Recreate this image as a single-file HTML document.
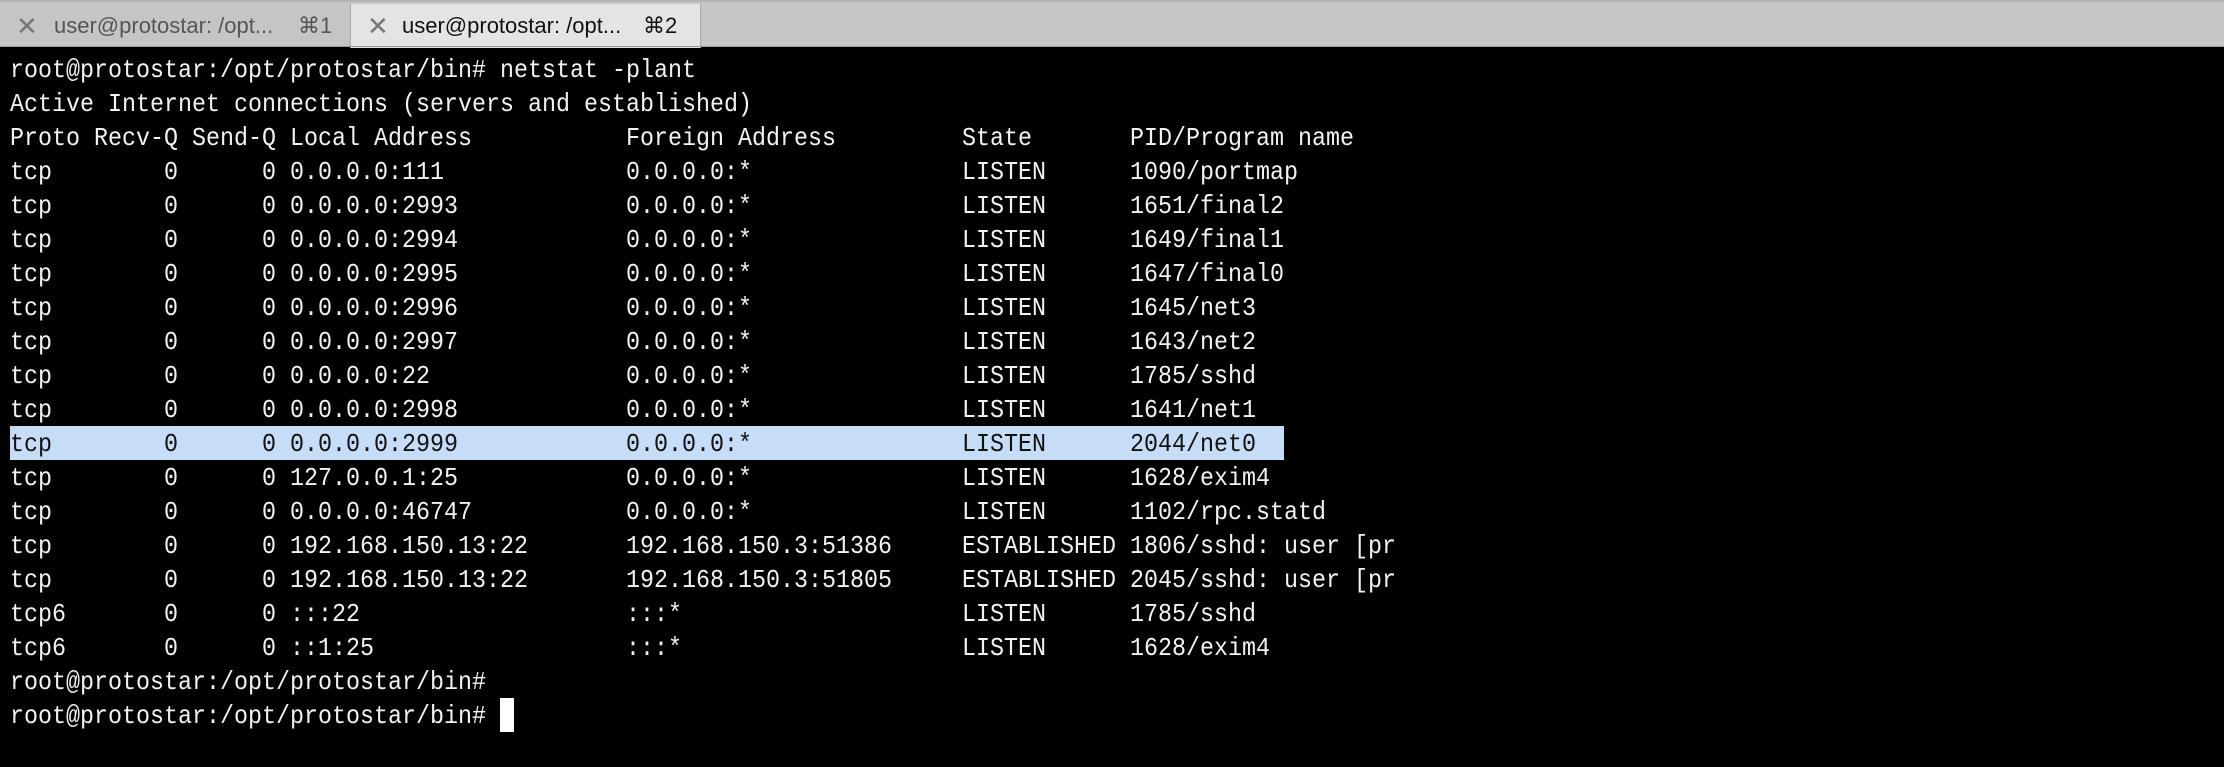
<!DOCTYPE html>
<html><head><meta charset="utf-8"><style>
html,body{margin:0;padding:0;}
body{width:2224px;height:767px;background:#000;position:relative;overflow:hidden;}
.bar{position:absolute;left:0;top:0;width:2224px;height:47px;background:#c5c5c5;border-top:2px solid #b3b3b3;box-sizing:border-box;}
.tab{position:absolute;top:2px;height:44px;font:22px "Liberation Sans",sans-serif;line-height:44px;}
.t1{left:0;width:350px;color:#555;border-right:1px solid #aaa;}
.t2{left:351px;width:349px;background:#e4e4e4;color:#111;border-right:1px solid #aaa;}
.x{position:absolute;top:0;font-size:26px;color:#777;}
.bline{position:absolute;left:0;top:46px;width:2224px;height:1px;background:#999;}
pre{position:absolute;left:10px;top:53px;margin:0;font:25.93px/34px "Liberation Mono",monospace;color:#f2f2f2;transform:scaleX(0.9);transform-origin:0 0;}
.hl{position:absolute;left:10px;top:426px;width:1274px;height:34px;background:#c6dcf7;}
.cur{position:absolute;left:500px;top:698px;width:14px;height:34px;background:#fff;}
.h{color:#111;}
</style></head><body>
<div class="bar">
<div class="tab t1"><span class="x" style="left:16px">✕</span><span style="position:absolute;left:54px">user@protostar: /opt...</span><span style="position:absolute;left:298px">⌘1</span></div>
<div class="tab t2"><span class="x" style="left:16px">✕</span><span style="position:absolute;left:51px">user@protostar: /opt...</span><span style="position:absolute;left:292px">⌘2</span></div>
</div>
<div class="bline"></div>
<div class="hl"></div>
<div class="cur"></div>
<pre>root@protostar:/opt/protostar/bin# netstat -plant
Active Internet connections (servers and established)
Proto Recv-Q Send-Q Local Address           Foreign Address         State       PID/Program name
tcp        0      0 0.0.0.0:111             0.0.0.0:*               LISTEN      1090/portmap
tcp        0      0 0.0.0.0:2993            0.0.0.0:*               LISTEN      1651/final2
tcp        0      0 0.0.0.0:2994            0.0.0.0:*               LISTEN      1649/final1
tcp        0      0 0.0.0.0:2995            0.0.0.0:*               LISTEN      1647/final0
tcp        0      0 0.0.0.0:2996            0.0.0.0:*               LISTEN      1645/net3
tcp        0      0 0.0.0.0:2997            0.0.0.0:*               LISTEN      1643/net2
tcp        0      0 0.0.0.0:22              0.0.0.0:*               LISTEN      1785/sshd
tcp        0      0 0.0.0.0:2998            0.0.0.0:*               LISTEN      1641/net1
<span class="h">tcp        0      0 0.0.0.0:2999            0.0.0.0:*               LISTEN      2044/net0</span>
tcp        0      0 127.0.0.1:25            0.0.0.0:*               LISTEN      1628/exim4
tcp        0      0 0.0.0.0:46747           0.0.0.0:*               LISTEN      1102/rpc.statd
tcp        0      0 192.168.150.13:22       192.168.150.3:51386     ESTABLISHED 1806/sshd: user [pr
tcp        0      0 192.168.150.13:22       192.168.150.3:51805     ESTABLISHED 2045/sshd: user [pr
tcp6       0      0 :::22                   :::*                    LISTEN      1785/sshd
tcp6       0      0 ::1:25                  :::*                    LISTEN      1628/exim4
root@protostar:/opt/protostar/bin#
root@protostar:/opt/protostar/bin# </pre>
</body></html>
